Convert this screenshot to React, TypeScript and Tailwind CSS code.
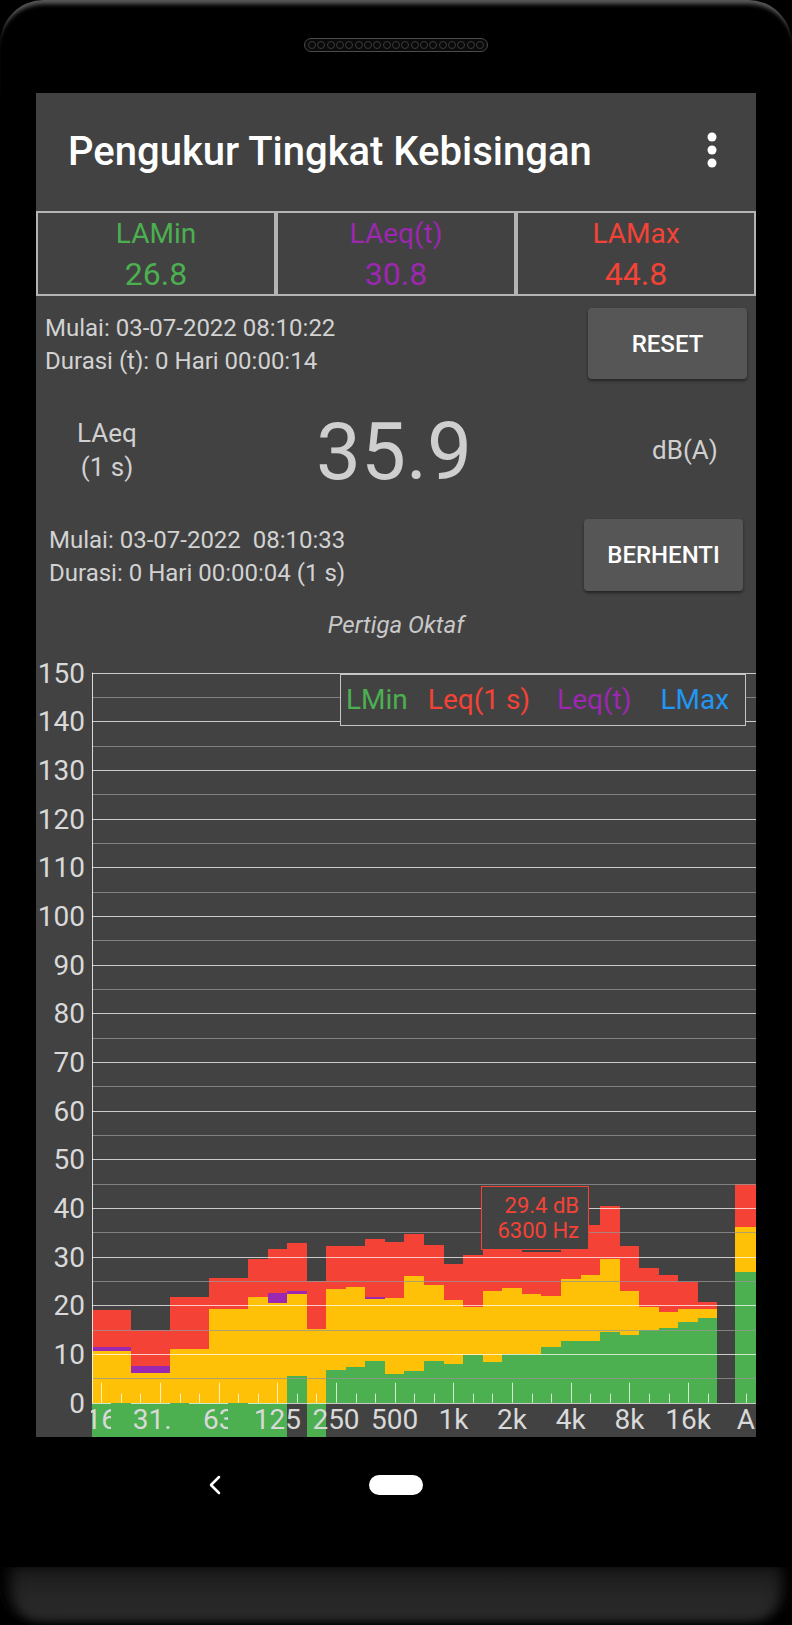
import React from "react";

const GREEN = "#4caf50";
const YELLOW = "#ffc107";
const RED = "#f44336";
const PURPLE = "#9c27b0";

// [LMin (-1 = below zero), yellow top, purple top (0 = none), red top]
const BANDS: [number, number, number, number][] = [
  [-1, 10.7, 11.5, 19.0],
  [-1, 10.7, 11.5, 19.0],
  [-1, 6.2, 7.6, 14.9],
  [-1, 6.2, 7.6, 14.9],
  [-1, 11.1, 0, 21.8],
  [-1, 11.1, 0, 21.8],
  [-1, 19.2, 0, 25.6],
  [-1, 19.2, 0, 25.6],
  [-1, 21.8, 0, 29.5],
  [-1, 20.5, 22.6, 31.5],
  [5.5, 22.3, 23.0, 32.9],
  [-1, 15.1, 0, 25.0],
  [6.8, 23.3, 0, 32.2],
  [7.3, 23.8, 0, 32.2],
  [8.6, 21.4, 21.8, 33.6],
  [5.9, 21.6, 0, 33.0],
  [6.6, 26.0, 0, 34.7],
  [8.6, 24.2, 0, 32.4],
  [7.9, 21.2, 0, 28.6],
  [9.7, 19.7, 0, 30.3],
  [8.4, 22.9, 0, 32],
  [10.1, 23.6, 0, 32],
  [10.1, 22.3, 0, 31.0],
  [11.4, 21.9, 0, 31.0],
  [12.7, 25.4, 0, 31.4],
  [12.7, 26.2, 0, 36.5],
  [14.5, 29.5, 0, 40.4],
  [14.0, 22.9, 0, 32.2],
  [14.9, 19.7, 0, 27.7],
  [15.4, 18.7, 0, 26.2],
  [16.5, 19.2, 0, 24.8],
  [17.5, 19.2, 0, 20.6],
];

const XLABELS = ["16", "31.5", "63", "125", "250", "500", "1k", "2k", "4k", "8k", "16k"];

function ChartSvg() {
  const X0 = 55.5;
  const BW = 19.56;
  const Y0 = 761.7;
  const K = 4.867;
  const H = 796;
  const W = 720;
  const yOf = (v: number) => Y0 - K * v;
  const bx = (i: number) => Math.round(X0 + i * BW);
  const bw = (i: number) => bx(i + 1) - bx(i);
  const els: React.ReactNode[] = [];

  BANDS.forEach(([g, y, p, r], i) => {
    const x = bx(i);
    const w = bw(i);
    const base = g > 0 ? g : 0;
    if (g > 0) els.push(<rect key={`g${i}`} x={x} y={yOf(g)} width={w} height={K * g} fill={GREEN} />);
    els.push(<rect key={`y${i}`} x={x} y={yOf(y)} width={w} height={K * (y - base)} fill={YELLOW} />);
    const under = p > 0 ? p : y;
    if (p > 0) els.push(<rect key={`p${i}`} x={x} y={yOf(p)} width={w} height={K * (p - y)} fill={PURPLE} />);
    els.push(<rect key={`r${i}`} x={x} y={yOf(r)} width={w} height={K * (r - under)} fill={RED} />);
  });

  // A bar
  els.push(<rect key="ag" x={699} y={yOf(26.8)} width={21} height={K * 26.8} fill={GREEN} />);
  els.push(<rect key="ay" x={699} y={yOf(36.0)} width={21} height={K * (36.0 - 26.8)} fill={YELLOW} />);
  els.push(<rect key="ar" x={699} y={yOf(44.9)} width={21} height={K * (44.9 - 36.0)} fill={RED} />);

  const negStrip = (i: number, key: string) => (
    <rect key={key} x={bx(i)} y={Math.round(Y0)} width={bw(i)} height={H - Math.round(Y0)} fill={GREEN} />
  );

  BANDS.forEach(([g], i) => {
    if (g < 0) els.push(negStrip(i, `n${i}`));
  });

  const grid: React.ReactNode[] = [];
  for (let v = 0; v <= 150; v += 5) {
    const yy = Math.round(yOf(v)) + 0.5;
    const major = v % 10 === 0;
    grid.push(
      <line
        key={`l${v}`}
        x1={56}
        x2={W}
        y1={yy}
        y2={yy}
        stroke={major ? "rgba(255,255,255,0.72)" : "rgba(150,150,150,0.75)"}
        strokeWidth={1}
      />
    );
  }

  const ticks: React.ReactNode[] = [];
  for (let i = 0; i < 32; i++) {
    const cx = Math.round(X0 + (i + 0.5) * BW) + 0.5;
    const len = i % 3 === 0 ? 20 : 9;
    ticks.push(
      <line key={`t${i}`} x1={cx} x2={cx} y1={Y0} y2={Y0 - len} stroke="rgba(255,255,255,0.75)" strokeWidth={1} />
    );
  }
  ticks.push(<line key="tA" x1={710.5} x2={710.5} y1={Y0} y2={Y0 - 9} stroke="rgba(255,255,255,0.75)" strokeWidth={1} />);

  const ylabels: React.ReactNode[] = [];
  for (let v = 0; v <= 150; v += 10) {
    ylabels.push(
      <text key={`yl${v}`} x={49} y={yOf(v) + 10} textAnchor="end" fontSize={28} fill="#d9d9d9" fontFamily="Roboto, sans-serif">
        {v}
      </text>
    );
  }

  return (
    <svg width={W} height={H} viewBox={`0 0 ${W} ${H}`} className="block">
      <defs>
        <clipPath id="xlabclip">
          <rect x={55} y={Y0} width={W - 55} height={H - Y0} />
        </clipPath>
      </defs>
      <g shapeRendering="crispEdges">{els}</g>
      {grid}
      <line x1={56.5} x2={56.5} y1={yOf(150)} y2={Y0} stroke="rgba(255,255,255,0.8)" strokeWidth={1} />
      {ticks}
      {ylabels}
      <g clipPath="url(#xlabclip)">
        {XLABELS.map((l, k) => (
          <text
            key={`xl${k}`}
            x={X0 + (k * 3 + 0.5) * BW}
            y={788}
            textAnchor="middle"
            fontSize={28}
            fill="#d9d9d9"
            fontFamily="Roboto, sans-serif"
          >
            {l}
          </text>
        ))}
        <text x={710} y={788} textAnchor="middle" fontSize={28} fill="#d9d9d9" fontFamily="Roboto, sans-serif">
          A
        </text>
        <g shapeRendering="crispEdges">
          {negStrip(1, "o1")}
          {negStrip(4, "o4")}
          {negStrip(7, "o7")}
        </g>
      </g>
    </svg>
  );
}

function Grille() {
  return (
    <div className="w-[184px] h-[14px] rounded-full border border-[#4a4a4a] bg-[#0a0a0a] flex items-center justify-between px-[3px]">
      {Array.from({ length: 19 }).map((_, i) => (
        <div key={i} className="w-[8px] h-[8px] rounded-full border border-[#3a3a3a]" />
      ))}
    </div>
  );
}

export default function App() {
  return (
    <div className="w-[792px] h-[1625px] bg-black flex flex-col overflow-hidden font-['Roboto',sans-serif]">
      {/* top bezel */}
      <div className="h-[93px] shrink-0 rounded-t-[44px] shadow-[inset_0_7px_4px_-3px_#5a5a5a] flex justify-center pt-[38px]">
        <Grille />
      </div>

      {/* screen */}
      <div className="mx-[36px] w-[720px] h-[1344px] shrink-0 bg-[#424242] flex flex-col overflow-hidden">
        {/* toolbar */}
        <div className="h-[118px] shrink-0 flex items-center pl-[32px]">
          <div className="text-[40px] leading-[40px] font-medium text-white">Pengukur Tingkat Kebisingan</div>
          <svg width="10" height="36" viewBox="0 0 10 36" className="ml-auto mr-[39px] -mt-[4px]">
            <circle cx="5" cy="5" r="4.5" fill="#ffffff" />
            <circle cx="5" cy="18" r="4.5" fill="#ffffff" />
            <circle cx="5" cy="31" r="4.5" fill="#ffffff" />
          </svg>
        </div>

        {/* summary table */}
        <div className="grid grid-cols-3 h-[85px] shrink-0">
          <div className="border-2 border-[#b4b4b4] flex flex-col items-center pt-[4px]">
            <span className="text-[28px] leading-[34px] text-[#4caf50]">LAMin</span>
            <span className="mt-[5px] text-[32px] leading-[36px] text-[#4caf50]">26.8</span>
          </div>
          <div className="border-2 border-[#b4b4b4] flex flex-col items-center pt-[4px]">
            <span className="text-[28px] leading-[34px] text-[#9c27b0]">LAeq(t)</span>
            <span className="mt-[5px] text-[32px] leading-[36px] text-[#9c27b0]">30.8</span>
          </div>
          <div className="border-2 border-[#b4b4b4] flex flex-col items-center pt-[4px]">
            <span className="text-[28px] leading-[34px] text-[#f44336]">LAMax</span>
            <span className="mt-[5px] text-[32px] leading-[36px] text-[#f44336]">44.8</span>
          </div>
        </div>

        {/* row 1 */}
        <div className="mt-[12px] h-[71px] shrink-0 flex justify-between pl-[9px] pr-[9px]">
          <div className="mt-[4px] text-[24px] leading-[33px] text-[#d2d2d2] whitespace-pre">
            <div>Mulai: 03-07-2022 08:10:22</div>
            <div>Durasi (t): 0 Hari 00:00:14</div>
          </div>
          <button className="w-[159px] h-[71px] rounded-[4px] bg-[#565656] shadow-[0_2px_3px_rgba(0,0,0,0.45)] text-white text-[24px] font-medium">
            RESET
          </button>
        </div>

        {/* main reading */}
        <div className="h-[140px] shrink-0 grid grid-cols-[142px_1fr_142px] items-start text-[#d0d0d0]">
          <div className="mt-[37px] text-center text-[26px] leading-[34px]">
            <div>LAeq</div>
            <div>(1 s)</div>
          </div>
          <div className="mt-[33px] pr-[4px] text-center text-[80px] leading-[80px] text-[#cfcfcf]">35.9</div>
          <div className="mt-[54px] text-center text-[26px] leading-[34px]">dB(A)</div>
        </div>

        {/* row 2 */}
        <div className="h-[72px] shrink-0 flex justify-between pl-[13px] pr-[13px]">
          <div className="mt-[5px] text-[24px] leading-[33px] text-[#d2d2d2] whitespace-pre">
            <div>Mulai: 03-07-2022  08:10:33</div>
            <div>Durasi: 0 Hari 00:00:04 (1 s)</div>
          </div>
          <button className="w-[159px] h-[72px] rounded-[4px] bg-[#565656] shadow-[0_2px_3px_rgba(0,0,0,0.45)] text-white text-[24px] font-medium">
            BERHENTI
          </button>
        </div>

        {/* chart title */}
        <div className="h-[50px] shrink-0 pt-[18px] text-center italic text-[24px] leading-[32px] text-[#c8c8c8]">
          Pertiga Oktaf
        </div>

        {/* chart */}
        <div className="relative h-[796px] shrink-0">
          <ChartSvg />
          <div className="absolute left-[304px] top-[33px] w-[406px] h-[52px] border border-[#c4c4c4] bg-[#424242] flex items-center pl-[5px] text-[28px] leading-none">
            <span className="text-[#4caf50]">LMin</span>
            <span className="ml-[20px] text-[#f44336]">Leq(1 s)</span>
            <span className="ml-[27px] text-[#9c27b0]">Leq(t)</span>
            <span className="ml-[29px] text-[#2196f3]">LMax</span>
          </div>
          <div className="absolute left-[445px] top-[545px] w-[108px] h-[64px] border border-[#f44336] bg-[#424242] text-right pr-[9px] pt-[6px] text-[22px] leading-[25px] text-[#f44336]">
            <div>29.4 dB</div>
            <div>6300 Hz</div>
          </div>
        </div>
      </div>

      {/* nav bar */}
      <div className="h-[130px] shrink-0">
        <div className="mx-auto w-[542px] h-[96px] grid grid-cols-3 items-center justify-items-center">
          <svg width="12" height="20" viewBox="0 0 12 20">
            <polyline points="10,2 2,10 10,18" fill="none" stroke="#ffffff" strokeWidth="2.5" strokeLinecap="round" strokeLinejoin="round" />
          </svg>
          <div className="w-[54px] h-[20px] rounded-full bg-white" />
          <div />
        </div>
      </div>

      {/* bottom bezel */}
      <div className="h-[58px] shrink-0 rounded-b-[36px] bg-linear-to-b from-[#1a1a1a] via-[#262626] to-[#2a2a2a] shadow-[inset_16px_0_14px_-6px_#000,inset_-16px_0_14px_-6px_#000,inset_0_-8px_10px_-6px_#000]" />
    </div>
  );
}
